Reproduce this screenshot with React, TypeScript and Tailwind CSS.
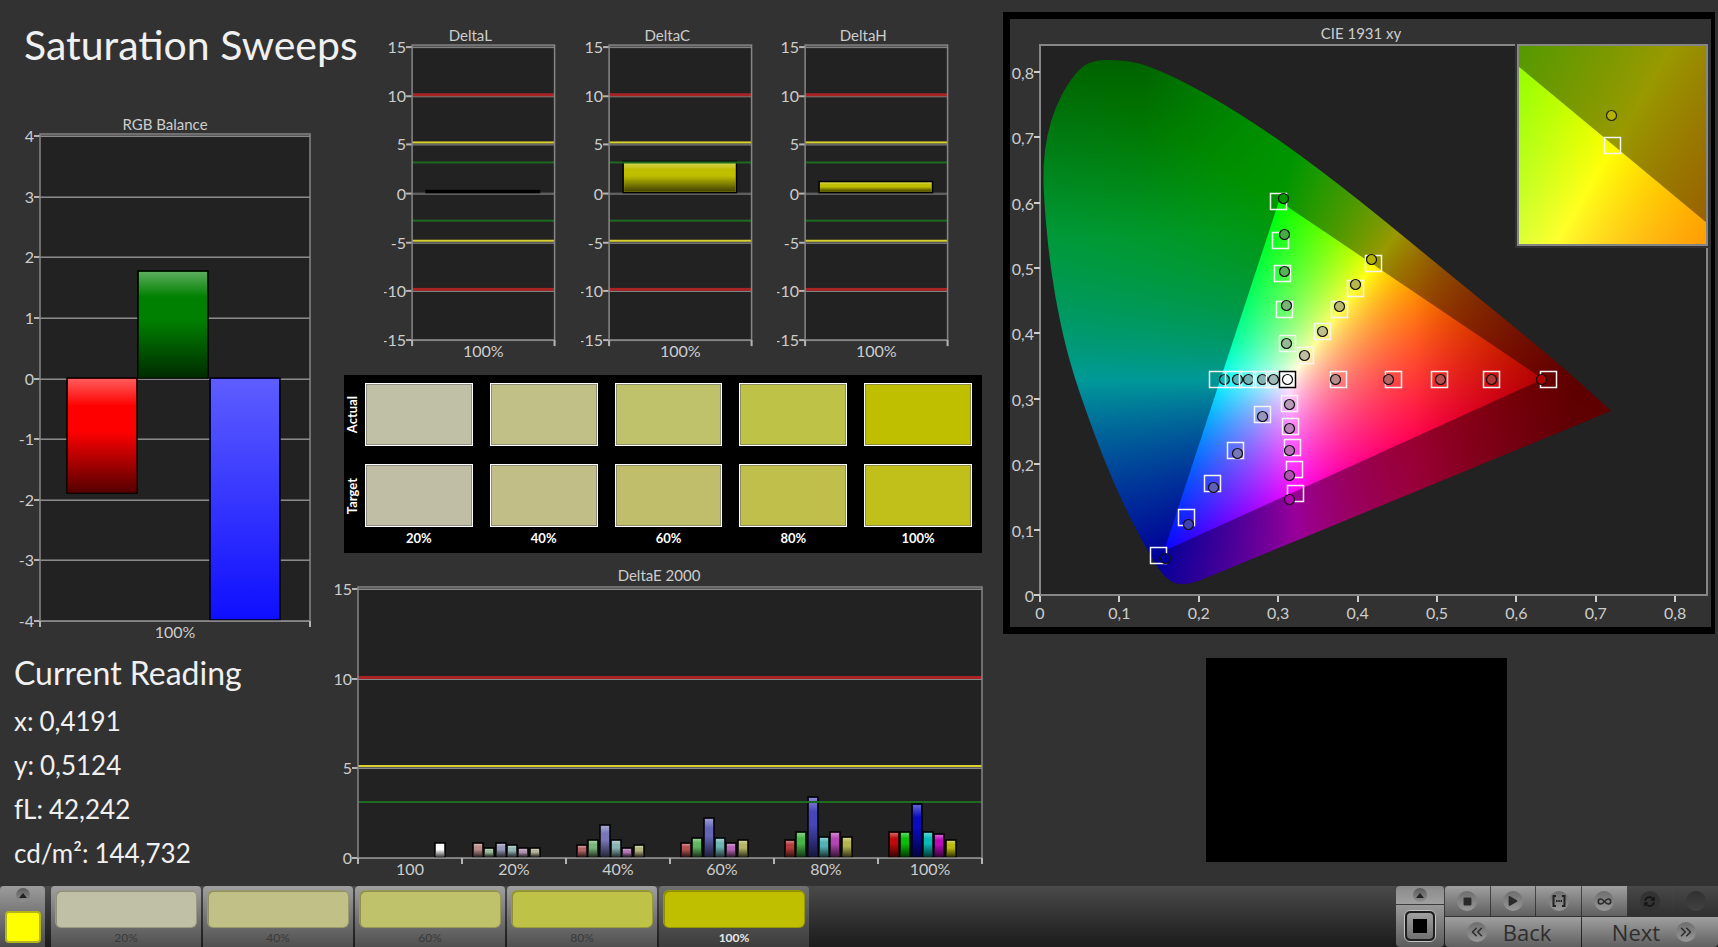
import React, { useEffect, useRef } from "react";
import { ChevronsLeft, ChevronsRight, Infinity as InfinityIcon } from "lucide-react";
import { FaPlay, FaStop, FaSyncAlt } from "react-icons/fa";

type Bar = { x: number; width: number; value: number; color: string };
type Limit = { value: number; color: string; thickness: number };

type ChartProps = {
  title: string;
  titleX: number;
  titleY: number;
  width: number;
  height: number;
  left: number;
  right: number;
  top: number;
  bottom: number;
  min: number;
  max: number;
  step: number;
  categories: string[];
  bars: Bar[];
  limits?: Limit[];
};

const deltaLimits: Limit[] = [
  { value: 10, color: "#a82424", thickness: 3 },
  { value: 5, color: "#d8d030", thickness: 2 },
  { value: 3, color: "#1e6a20", thickness: 2 },
  { value: -3, color: "#1e6a20", thickness: 2 },
  { value: -5, color: "#d8d030", thickness: 2 },
  { value: -10, color: "#a82424", thickness: 3 },
];

const swatches = [
  { label: "20%", actual: "#c0c0a6", target: "#c0bfa5" },
  { label: "40%", actual: "#c1c187", target: "#c1bf87" },
  { label: "60%", actual: "#bfc16b", target: "#c0be6b" },
  { label: "80%", actual: "#bec247", target: "#c0bf4b" },
  { label: "100%", actual: "#bfbf00", target: "#c1bf1a" },
];

const deltaEGroups = [
  { start: 143, values: [0.8, 0.5, 0.8, 0.65, 0.5, 0.5], colors: ["#b98a8a", "#9bb99b", "#9696b9", "#96b4b4", "#b496b4", "#b4b49b"] },
  { start: 247, values: [0.65, 0.95, 1.8, 0.95, 0.5, 0.65], colors: ["#b46464", "#7ab47a", "#7878b9", "#8ab4b4", "#b478b4", "#b4b47d"] },
  { start: 351, values: [0.8, 1.05, 2.2, 1.05, 0.8, 0.95], colors: ["#b45050", "#5fb45f", "#6464b9", "#6eb4b4", "#b464b4", "#b4b464"] },
  { start: 455, values: [0.95, 1.37, 3.33, 1.13, 1.37, 1.13], colors: ["#b43c3c", "#46b446", "#4646b9", "#50b4b4", "#b446b4", "#b4b450"] },
  { start: 559, values: [1.37, 1.37, 2.95, 1.37, 1.28, 0.95], colors: ["#be0a0a", "#0abe0a", "#0a0abe", "#0ab9b9", "#b90ab9", "#b9b90a"] },
];

const deltaEBars: Bar[] = [
  { x: 105, width: 10, value: 0.8, color: "#ffffff" },
  ...deltaEGroups.flatMap((group) =>
    group.values.map((value, i) => ({ x: group.start + Math.round(i * 11.3), width: 10, value, color: group.colors[i] }))
  ),
];

const range = (min: number, max: number, step: number) => {
  const out: number[] = [];
  for (let v = max; v >= min; v -= step) out.push(v);
  return out;
};

function Chart(props: ChartProps) {
  const { title, titleX, titleY, width, height, left, right, top, bottom, min, max, step, categories, bars, limits = [] } = props;
  const y = (v: number) => Math.round(top + ((bottom - top) * (max - v)) / (max - min));
  const slot = (right - left) / categories.length;
  const shadeId = `shade-${title.replace(/\s/g, "")}`;

  return (
    <svg viewBox={`0 0 ${width} ${height}`} className="block w-full h-auto" role="img" aria-label={title}>
      <defs>
        <linearGradient id={shadeId} x1="0" y1="0" x2="0" y2="1">
          <stop offset="0" stopColor="#fff" stopOpacity="0.36" />
          <stop offset="0.24" stopColor="#fff" stopOpacity="0" />
          <stop offset="0.46" stopColor="#000" stopOpacity="0" />
          <stop offset="1" stopColor="#000" stopOpacity="0.66" />
        </linearGradient>
        <linearGradient id={`${shadeId}-tall`} x1="0" y1="0" x2="0" y2="1">
          <stop offset="0" stopColor="#fff" stopOpacity="0.34" />
          <stop offset="1" stopColor="#fff" stopOpacity="0.02" />
        </linearGradient>
      </defs>
      <text x={titleX} y={titleY} textAnchor="middle" fontSize="15" fill="#cdcdcd">{title}</text>
      <rect x={left} y={top - 2} width={right - left} height={bottom - top + 2} fill="#222222" />
      {range(min, max, step).map((v) => (
        <g key={v}>
          <rect x={left} y={y(v) - 1} width={right - left} height="1" fill="#5a5a5a" />
          <rect x={left} y={y(v)} width={right - left} height="1" fill="#8a8a8a" />
          <rect x={left - 6} y={y(v) - 1} width="6" height="2" fill="#b4b4b4" />
          <text x={left - 6} y={y(v) + 6} textAnchor="end" fontSize="16" fill="#cdcdcd">{v}</text>
        </g>
      ))}
      {bars.map((bar, i) => {
        const base = y(0) - 1;
        const cut = Math.max(bar.value, min);
        const y1 = Math.min(base, y(cut) - 1);
        const h = Math.max(2, Math.abs(y(cut) - 1 - base));
        return (
          <g key={i}>
            <rect x={bar.x} y={y1} width={bar.width} height={h} fill={bar.color} stroke="#000" strokeWidth="1.5" />
            {bar.color !== "#000000" && (
              <rect
                x={bar.x + 1}
                y={y1 + 1}
                width={bar.width - 2}
                height={Math.max(0, h - 2)}
                fill={bar.value < min ? `url(#${shadeId}-tall)` : `url(#${shadeId})`}
              />
            )}
          </g>
        );
      })}
      {limits.map((l) => (
        <rect key={l.value} x={left} y={y(l.value) - 3} width={right - left} height={l.thickness} fill={l.color} />
      ))}
      <rect x={left} y={top - 2} width={right - left} height={bottom - top + 2} fill="none" stroke="#868686" strokeWidth="1.5" />
      {categories.map((c, i) => (
        <g key={c}>
          <rect x={Math.round(left + slot * i) - 1} y={bottom} width="2" height="6" fill="#b4b4b4" />
          <text x={left + slot * (i + 0.5)} y={bottom + 17} textAnchor="middle" fontSize="16" fill="#cdcdcd">{c}</text>
        </g>
      ))}
      <rect x={right - 1} y={bottom} width="2" height="6" fill="#b4b4b4" />
    </svg>
  );
}

// ---- CIE diagram ----

// spectral locus in plot pixels, clockwise from the red corner
const locusPoints: [number, number][] = [
  [571, 367], [566, 369], [166, 534], [158, 537], [148, 540], [136, 540], [127, 535], [118, 524], [105, 502], [84, 462], [62, 411],
  [45, 364], [35, 335], [25, 300], [15, 253], [8, 203], [4, 155], [3, 121], [7, 91], [15, 64], [28, 39], [42, 22], [56, 16],
  [80, 16], [99, 19], [118, 26], [138, 35], [168, 51], [195, 67], [238, 95], [280, 126], [320, 157], [357, 187], [413, 233], [510, 312], [566, 362],
];

const locus = (() => {
  const [first, ...rest] = locusPoints;
  let d = `M${first[0]} ${first[1]}`;
  rest.forEach(([x, y], i) => {
    const next = rest[i + 1] ?? first;
    d += ` Q${x} ${y} ${(x + next[0]) / 2} ${(y + next[1]) / 2}`;
  });
  return `${d} Z`;
})();
const gamut = "M239 157 L503 335 L124 507 Z";

const clamp = (v: number) => Math.min(1, Math.max(0, v));

// chromaticity to a display colour with the brightest channel at full
const toRgb = (x: number, y: number) => {
  const X = x / y;
  const Z = (1 - x - y) / y;
  const lin = [3.2406 * X - 1.5372 - 0.4986 * Z, -0.9689 * X + 1.8758 + 0.0415 * Z, 0.0557 * X - 0.204 + 1.057 * Z].map((c) => Math.max(0, c));
  const peak = Math.max(...lin, 0.0001);
  const fade = (1 - 0.38 * clamp((x - 0.47) / 0.2)) * (1 - 0.36 * clamp((y - 0.55) / 0.27) * clamp((0.35 - x) / 0.22));
  return lin.map((c) => 255 * Math.pow(c / peak, 0.9) * fade);
};

type GamutProps = { width: number; height: number; x0: number; x1: number; y0: number; y1: number; outline?: string; triangle: string };

function GamutCanvas({ width, height, x0, x1, y0, y1, outline, triangle }: GamutProps) {
  const ref = useRef<HTMLCanvasElement>(null);

  useEffect(() => {
    const ctx = ref.current?.getContext("2d");
    if (!ctx) return;
    const layer = (gain: number) => {
      const buffer = document.createElement("canvas");
      buffer.width = width;
      buffer.height = height;
      const bctx = buffer.getContext("2d")!;
      const image = bctx.createImageData(width, height);
      for (let j = 0; j < height; j++) {
        for (let i = 0; i < width; i++) {
          const rgb = toRgb(x0 + ((x1 - x0) * i) / width, Math.max(0.005, y1 - ((y1 - y0) * j) / height));
          const k = (j * width + i) * 4;
          image.data[k] = rgb[0] * gain;
          image.data[k + 1] = rgb[1] * gain;
          image.data[k + 2] = rgb[2] * gain;
          image.data[k + 3] = 255;
        }
      }
      bctx.putImageData(image, 0, 0);
      return buffer;
    };
    ctx.clearRect(0, 0, width, height);
    ctx.save();
    if (outline) ctx.clip(new Path2D(outline));
    ctx.drawImage(layer(0.6), 0, 0);
    ctx.clip(new Path2D(triangle));
    ctx.drawImage(layer(1), 0, 0);
    ctx.restore();
  }, [width, height, x0, x1, y0, y1, outline, triangle]);

  return <canvas ref={ref} width={width} height={height} className="block w-full h-full" />;
}

// [target x, target y, measured x, measured y, fill]
const points: [number, number, number, number, string][] = [
  [268, 182, 273, 179, "#009600"],
  [270, 221, 274, 215, "#46aa46"],
  [272, 254, 274, 252, "#5aaf5a"],
  [274, 290, 276, 286, "#78b478"],
  [277, 324, 276, 324, "#96b996"],
  [363, 244, 361, 240, "#b4b400"],
  [345, 269, 345, 265, "#b9b94b"],
  [329, 290, 329, 287, "#b9b96e"],
  [312, 312, 312, 312, "#bebe8c"],
  [295, 336, 294, 336, "#bebea5"],
  [328, 360, 325, 360, "#b98c8c"],
  [383, 360, 378, 360, "#b96464"],
  [429, 360, 430, 360, "#b95050"],
  [481, 360, 481, 360, "#b43737"],
  [538, 360, 531, 360, "#b40000"],
  [207, 360, 214, 360, "#14b4b4"],
  [223, 360, 227, 360, "#50b4b4"],
  [237, 360, 238, 360, "#6eb4b4"],
  [251, 360, 252, 360, "#82b4b4"],
  [264, 360, 263, 360, "#a0b9b9"],
  [279, 384, 279, 385, "#b99bb9"],
  [280, 407, 279, 409, "#b982b9"],
  [282, 428, 279, 431, "#b96eb9"],
  [284, 450, 279, 456, "#b450b4"],
  [285, 474, 279, 480, "#b400b4"],
  [252, 395, 252, 397, "#9696be"],
  [225, 431, 227, 434, "#7878b9"],
  [202, 464, 203, 468, "#5f5fb9"],
  [176, 498, 178, 505, "#4141b9"],
  [148, 536, 155, 539, "#0000a0"],
];

function CieChart() {
  const ticks = [0, 1, 2, 3, 4, 5, 6, 7, 8];
  const label = (n: number) => (n === 0 ? "0" : `0,${n}`);
  return (
    <svg viewBox="0 0 701 608" className="block w-full h-auto bg-[#323232]" role="img" aria-label="CIE 1931 xy">
      <text x="351" y="20" textAnchor="middle" fontSize="15" fill="#cdcdcd">CIE 1931 xy</text>
      <rect x="30" y="26" width="667" height="550" fill="#222222" stroke="#868686" strokeWidth="2" />
      {ticks.map((n) => (
        <g key={n} fill="#cdcdcd" fontSize="16">
          <rect x={Math.round(29 + n * 79.4)} y="577" width="2" height="6" />
          <text x={30 + n * 79.4} y="600" textAnchor="middle">{label(n)}</text>
          <rect x="24" y={Math.round(575 - n * 65.4)} width="6" height="2" />
          <text x="24" y={Math.round(583 - n * 65.4)} textAnchor="end">{label(n)}</text>
        </g>
      ))}
      <foreignObject x="30" y="25" width="667" height="551">
        <GamutCanvas width={667} height={551} x0={0} x1={0.84} y0={0} y1={0.842} outline={locus} triangle={gamut} />
      </foreignObject>
      {points.map(([tx, ty, mx, my, fill], i) => (
        <g key={i}>
          <rect x={tx - 7.5} y={ty - 7.5} width="16" height="16" fill="none" stroke="#f4f4f4" strokeWidth="1.5" />
          <circle cx={mx + 0.5} cy={my + 0.5} r="5" fill={fill} stroke="#111" strokeWidth="1.2" />
        </g>
      ))}
      <rect x="269.5" y="352.5" width="16" height="16" fill="#fff" stroke="#000" strokeWidth="1.5" />
      <circle cx="277.5" cy="360.5" r="5" fill="#fff" stroke="#111" strokeWidth="1.2" />
      <rect x="505" y="24" width="193" height="205" fill="#323232" />
      <foreignObject x="508" y="26" width="189" height="200">
        <GamutCanvas width={189} height={200} x0={0.378} x1={0.461} y0={0.463} y1={0.549} triangle="M0 21 L189 178 L189 200 L0 200 Z" />
      </foreignObject>
      <rect x="508" y="26" width="189" height="200" fill="none" stroke="#868686" strokeWidth="2" />
      <rect x="594.5" y="118.5" width="16" height="16" fill="none" stroke="#f4f4f4" strokeWidth="1.5" />
      <circle cx="601.5" cy="96.5" r="5" fill="#b4b400" stroke="#222" strokeWidth="1.2" />
    </svg>
  );
}

// ---- bottom bar ----

function Dimple({ children }: { children?: React.ReactNode }) {
  return (
    <span className="flex h-5 w-5 shrink-0 items-center justify-center rounded-full bg-gradient-to-b from-[#6e6e6e] to-[#989898] text-[#2a2a2a]">
      {children}
    </span>
  );
}

function UpArrow() {
  return (
    <span className="flex h-3.5 w-3.5 items-center justify-center rounded-full bg-gradient-to-b from-[#5a5a5a] to-[#929292]">
      <svg viewBox="0 0 8 5" className="h-[5px] w-2"><path d="M0 5 L4 0 L8 5 Z" fill="#222" /></svg>
    </span>
  );
}

function Toolbar() {
  const cell = "flex h-[30px] items-center justify-center bg-gradient-to-b from-[#a0a0a0] to-[#606060]";
  const dimmed = "flex h-[30px] items-center justify-center bg-gradient-to-b from-[#484848] to-[#303030]";
  return (
    <div className="flex gap-px">
      <div className="flex w-12 flex-col gap-px">
        <button aria-label="Expand pattern" className="flex h-[18px] items-center justify-center rounded-t bg-gradient-to-b from-[#8a8a8a] to-[#a0a0a0]">
          <UpArrow />
        </button>
        <button aria-label="Pattern window" className="flex h-[42px] items-center justify-center rounded-b bg-gradient-to-b from-[#9a9a9a] to-[#5c5c5c]">
          <span className="flex h-8 w-8 items-center justify-center rounded-md border border-[#c4c4c4] bg-[#1e1e1e]">
            <span className="flex h-[26px] w-[26px] items-center justify-center rounded-sm bg-gradient-to-b from-[#a0a0a0] to-[#707070]">
              <span className="h-3.5 w-3.5 bg-black" />
            </span>
          </span>
        </button>
      </div>
      <div className="flex w-[273px] flex-col gap-px">
        <div className="grid grid-cols-6 gap-px">
          <button aria-label="Stop" className={`${cell} rounded-tl`}><Dimple><FaStop size={9} /></Dimple></button>
          <button aria-label="Play" className={cell}><Dimple><FaPlay size={10} /></Dimple></button>
          <button aria-label="Range" className={cell}>
            <Dimple>
              <svg viewBox="0 0 14 12" className="h-3 w-3.5" fill="none" stroke="#222" strokeWidth="2">
                <path d="M4 1 H1.5 V11 H4 M10 1 H12.5 V11 H10" />
                <path d="M4 6 H10" strokeDasharray="1.5 0.8" />
              </svg>
            </Dimple>
          </button>
          <button aria-label="Loop" className={cell}><Dimple><InfinityIcon size={15} strokeWidth={2.5} /></Dimple></button>
          <button aria-label="Refresh" className={dimmed}>
            <span className="flex h-5 w-5 items-center justify-center rounded-full bg-[#333333] text-[#151515]"><FaSyncAlt size={11} /></span>
          </button>
          <button aria-label="Record" className={`${dimmed} rounded-tr`}>
            <span className="h-5 w-5 rounded-full bg-gradient-to-b from-[#303030] to-[#424242]" />
          </button>
        </div>
        <div className="grid grid-cols-2 gap-px font-['Open_Sans',sans-serif] text-[22px] font-medium leading-none text-[#2e2e2e]">
          <button className="flex h-[30px] items-center justify-center gap-4 rounded-bl bg-gradient-to-b from-[#a0a0a0] to-[#606060] pr-2">
            <Dimple><ChevronsLeft size={18} /></Dimple>Back
          </button>
          <button className="flex h-[30px] items-center justify-center gap-4 rounded-br bg-gradient-to-b from-[#a0a0a0] to-[#606060] pl-2">
            Next<Dimple><ChevronsRight size={18} /></Dimple>
          </button>
        </div>
      </div>
    </div>
  );
}

export default function App() {
  return (
    <div className="flex min-h-screen flex-col bg-[#323232] font-['Lato','Liberation_Sans',sans-serif] text-[#f0f0f0]">
      <main className="grid flex-1 grid-cols-[330fr_660fr_728fr] items-start">
        <section className="min-w-0">
          <h1 className="flex h-[100px] items-center whitespace-nowrap pb-2.5 pl-6 text-[41px]">Saturation Sweeps</h1>
          <Chart
            title="RGB Balance" titleX={165} titleY={30} width={330} height={545}
            left={40} right={310} top={36} bottom={521} min={-4} max={4} step={1}
            categories={["100%"]}
            bars={[
              { x: 67, width: 70, value: -1.9, color: "#ff0000" },
              { x: 138, width: 70, value: 1.75, color: "#008000" },
              { x: 210, width: 70, value: -4.5, color: "#0a0aff" },
            ]}
          />
          <div className="pl-3.5 pt-1">
            <h2 className="text-[32px] leading-12">Current Reading</h2>
            <dl className="pt-0.5 text-[26px] leading-11">
              {[["x", "0,4191"], ["y", "0,5124"], ["fL", "42,242"], ["cd/m²", "144,732"]].map(([k, v]) => (
                <div key={k} className="flex gap-1.5">
                  <dt>{k}:</dt>
                  <dd>{v}</dd>
                </div>
              ))}
            </dl>
          </div>
        </section>

        <section className="min-w-0">
          <div className="grid grid-cols-3 pl-[54px] pr-4 pt-5">
            {[
              { title: "DeltaL", value: 0.2, color: "#000000" },
              { title: "DeltaC", value: 3.2, color: "#bfbf00" },
              { title: "DeltaH", value: 1.1, color: "#bfbf00" },
            ].map((d) => (
              <Chart
                key={d.title} title={d.title} titleX={86} titleY={21} width={196} height={344}
                left={28} right={170} top={27} bottom={319} min={-15} max={15} step={5}
                categories={["100%"]} limits={deltaLimits}
                bars={[{ x: 42, width: 113, value: d.value, color: d.color }]}
              />
            ))}
          </div>

          <div className="ml-3.5 mr-2 mt-2.5 grid grid-cols-[21px_1fr] gap-y-[18px] bg-black pb-1 pr-2.5 pt-2 text-[13px] font-bold text-white">
            {(["actual", "target"] as const).map((row) => (
              <React.Fragment key={row}>
                <div className="flex items-center justify-center pr-1">
                  <span className="rotate-180 capitalize [writing-mode:vertical-rl]">{row}</span>
                </div>
                <div className="grid grid-cols-5 gap-[17px]">
                  {swatches.map((s) => (
                    <div
                      key={s.label}
                      className="h-[63px] border border-white shadow-[inset_0_0_0_1px_rgba(110,110,110,0.6)]"
                      style={{ background: s[row] }}
                    />
                  ))}
                </div>
              </React.Fragment>
            ))}
            <div className="col-start-2 -mt-4 grid grid-cols-5 gap-[17px] text-center">
              {swatches.map((s) => <span key={s.label}>{s.label}</span>)}
            </div>
          </div>

          <div className="mt-2.5">
            <Chart
              title="DeltaE 2000" titleX={329} titleY={18} width={660} height={320}
              left={28} right={652} top={26} bottom={295} min={0} max={15} step={5}
              categories={["100", "20%", "40%", "60%", "80%", "100%"]}
              limits={deltaLimits.filter((l) => l.value > 0)}
              bars={deltaEBars}
            />
          </div>
        </section>

        <section className="min-w-0 pl-[13px] pr-[3px] pt-3">
          <div className="border-y-[7px] border-l-[7px] border-r-4 border-black">
            <CieChart />
          </div>
          <div className="ml-[203px] mt-6 h-[204px] w-[301px] bg-black" />
        </section>
      </main>

      <footer className="flex h-[61px] justify-between bg-gradient-to-b from-[#4a4a4a] to-[#1c1c1c]">
        <div className="flex">
          <button aria-label="Current colour" className="mr-1.5 flex w-[45px] flex-col items-center justify-between rounded-t bg-gradient-to-b from-[#9c9c9c] to-[#4c4c4c] pb-1 pt-0.5">
            <UpArrow />
            <span className="h-8 w-9 rounded border-2 border-[#b4b41e] bg-[#ffff00]" />
          </button>
          <div className="flex gap-0.5">
            {swatches.map((s) => {
              const active = s.label === "100%";
              return (
                <button
                  key={s.label}
                  className={`flex w-[150px] flex-col items-center rounded-t px-1 pt-1 text-xs ${
                    active
                      ? "bg-gradient-to-b from-[#707070] to-[#3c3c3c] font-bold text-[#e6e6e6]"
                      : "bg-gradient-to-b from-[#a0a0a0] to-[#505050] text-[#3a3a3a]"
                  }`}
                >
                  <span
                    className="h-[38px] w-full rounded-md border border-black/20 shadow-[inset_1px_1px_0_rgba(0,0,0,0.25)]"
                    style={{ backgroundColor: s.actual }}
                  />
                  <span className="mt-0.5">{s.label}</span>
                </button>
              );
            })}
          </div>
        </div>
        <Toolbar />
      </footer>
    </div>
  );
}
